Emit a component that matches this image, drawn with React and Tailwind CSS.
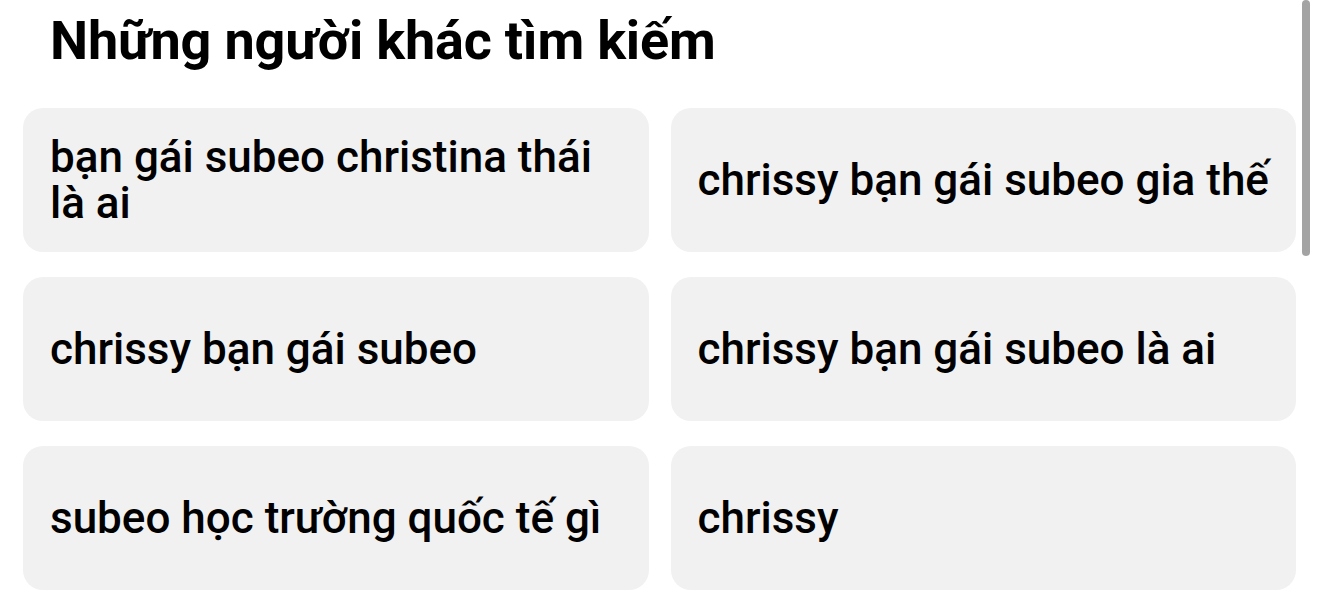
const searches = [
  "bạn gái subeo christina thái là ai",
  "chrissy bạn gái subeo gia thế",
  "chrissy bạn gái subeo",
  "chrissy bạn gái subeo là ai",
  "subeo học trường quốc tế gì",
  "chrissy",
];

export default function App() {
  return (
    <div
      className="relative h-[608px] w-[1320px] overflow-hidden bg-white text-black"
      style={{ fontFamily: "Roboto, 'Noto Sans', Arial, sans-serif" }}
    >
      <div className="pl-[23px] pr-[24px] pt-[14px]">
        <h2 className="pl-[27px] text-[54px] font-bold leading-[54px] tracking-[-0.2px]">
          Những người khác tìm kiếm
        </h2>
        <div className="mt-[40px] grid grid-cols-2 gap-x-[22px] gap-y-[25px]">
          {searches.map((q) => (
            <div
              key={q}
              className="flex h-[144px] items-center rounded-[20px] bg-[#f1f1f1] pl-[27px] pr-[12px]"
            >
              <span className="text-[44px] font-medium leading-[46px]">{q}</span>
            </div>
          ))}
        </div>
      </div>
      {/* scrollbar thumb */}
      <div className="absolute left-[1302px] top-0 h-[256px] w-[8px] rounded-full bg-[#a3a3a3]" />
    </div>
  );
}
